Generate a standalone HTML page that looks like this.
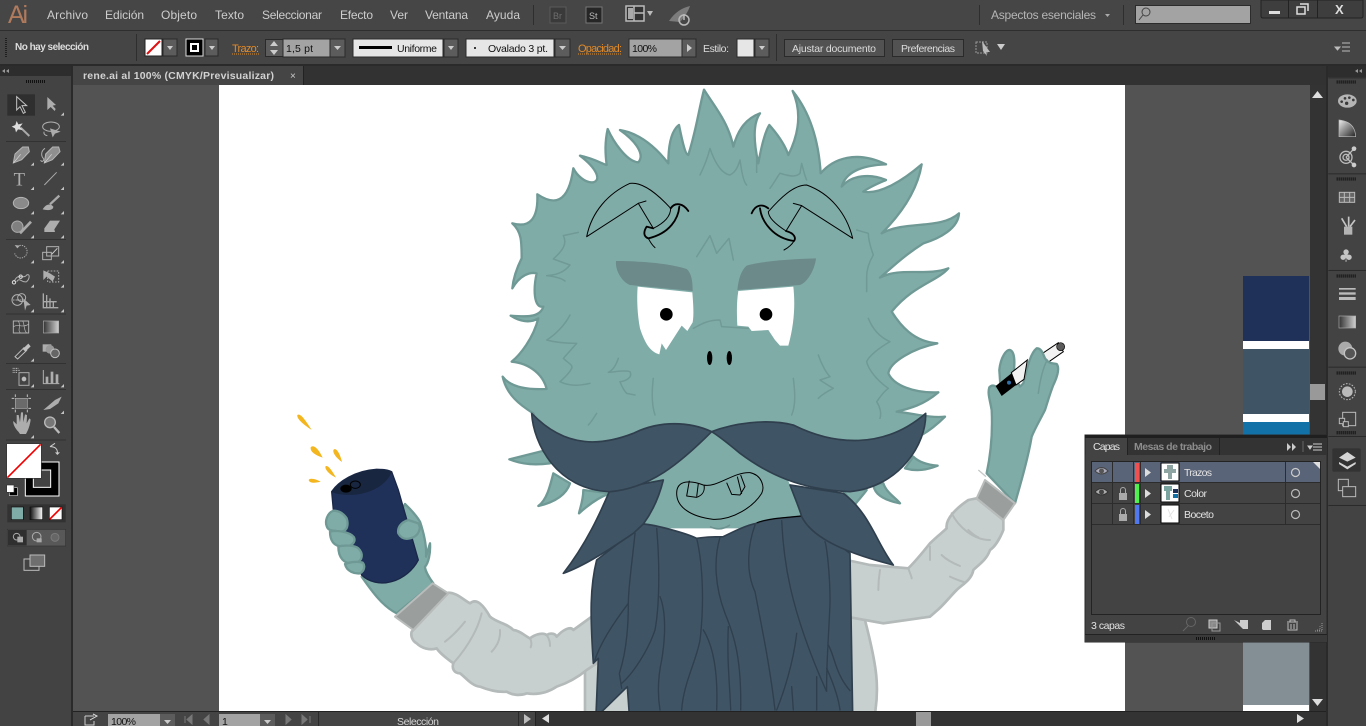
<!DOCTYPE html>
<html lang="es"><head><meta charset="utf-8"><title>rene.ai</title>
<style>
html,body{margin:0;padding:0;background:#434343;overflow:hidden}
svg{display:block;position:absolute;left:0;top:0}
text{font-family:"Liberation Sans",sans-serif;font-size:11px;fill:#cfcfcf}
.m{font-size:12px;fill:#cdcdcd}
.b{fill:#dcdcdc;font-size:10.5px}
.o{fill:#e08a2a}
.k{fill:#111;font-size:10.5px}
.t{stroke:#b0b0b0;fill:none;stroke-width:3}
.f{fill:#adadad}
.fur{fill:#80aca8;stroke:#6f9995;stroke-width:7;stroke-linejoin:round}
.ln{fill:none;stroke:#6f9a96;stroke-width:4.5;stroke-linejoin:round;stroke-linecap:round}
.sl{fill:#c8d0cf;stroke:#b3bab9;stroke-width:8;stroke-linejoin:round}
.slx{fill:none;stroke:#b3bab9;stroke-width:6;stroke-linecap:round}
.bd{fill:#3f5465;stroke:#2f3f4d;stroke-width:5;stroke-linejoin:round}
.sx{fill:none;stroke:#2f3f4d;stroke-width:4;stroke-linecap:round}
.h{fill:none;stroke:#000;stroke-width:3;stroke-linejoin:round;stroke-linecap:round}
.hb{fill:none;stroke:#000;stroke-width:5.5;stroke-linecap:round;stroke-linejoin:round}
.fly{fill:#c4c4c4}
.lay{font-size:10.5px;fill:#e2e2e2}
</style></head><body>
<svg width="1366" height="726" viewBox="0 0 1366 726" xmlns="http://www.w3.org/2000/svg">
<defs>
<clipPath id="ab"><rect x="219" y="85" width="906" height="626"/></clipPath>
<linearGradient id="g1" x1="0" x2="1" y1="0" y2="0"><stop offset="0" stop-color="#333"/><stop offset="1" stop-color="#d0d0d0"/></linearGradient>
<linearGradient id="g2" x1="0" x2="1" y1="0" y2="0"><stop offset="0" stop-color="#111"/><stop offset="1" stop-color="#fff"/></linearGradient>
<linearGradient id="g3" x1="0" x2="1" y1="0" y2="1"><stop offset="0" stop-color="#eee"/><stop offset="1" stop-color="#222"/></linearGradient>
</defs>

<!-- base -->
<rect width="1366" height="726" fill="#434343"/>
<rect x="73" y="85" width="1237" height="626" fill="#535353"/>
<rect x="1243" y="276" width="66" height="65" fill="#1f3059"/>
<rect x="1243" y="341" width="66" height="8" fill="#fff"/>
<rect x="1243" y="349" width="66" height="65" fill="#3f5465"/>
<rect x="1243" y="414" width="66" height="8" fill="#fff"/>
<rect x="1243" y="422" width="66" height="20" fill="#1272a7"/>
<rect x="1243" y="640" width="66" height="65" fill="#848f95"/>
<rect x="1243" y="705" width="66" height="6" fill="#fff"/>
<rect x="219" y="85" width="906" height="626" fill="#fff"/>

<!-- ARTWORK -->
<g clip-path="url(#ab)">
<!-- left sleeve + body -->
<g transform="translate(500,400) scale(.33333)">
<path class="sl" d="M255,790 L255,940 L400,940 L400,700 L290,780 Z"/>
<path class="sl" d="M1045,470 L1100,680 C1130,800 1138,860 1125,940 L1040,940 Z"/>
</g>
<g transform="translate(280,400) scale(.33333)">
<path class="sl" d="M395,695 L505,578 C530,578 548,598 570,610 C590,592 612,618 630,650 C650,668 682,670 700,690 C722,692 740,712 750,715 C770,700 790,698 800,705 C815,696 827,703 830,710 C850,688 872,678 880,690 L935,650 L950,790 L920,810 C890,835 860,850 830,860 C800,880 770,885 740,880 C720,888 695,885 680,875 C650,878 620,868 600,860 C575,858 555,830 540,820 C522,820 515,805 520,790 C500,775 480,760 470,745 C450,752 425,745 410,730 C395,722 392,705 395,695 Z"/>
<path class="slx" d="M605,640 C590,700 555,750 520,790"/>
<path class="slx" d="M555,665 C535,690 515,710 495,725"/>
<path class="slx" d="M660,690 C662,720 650,740 635,755"/>
<path class="slx" d="M750,715 C755,725 755,735 752,742"/>
<path class="slx" d="M800,705 C810,720 810,730 810,738"/>
<path class="fur" d="M245,530 C280,580 310,620 350,640 L460,550 C445,530 435,510 435,500 C445,490 452,460 450,430 L438,470 C440,440 435,410 420,365 C405,340 385,322 375,312 L300,450 Z"/>
<path d="M155,275 C175,245 225,212 290,208 C310,208 325,210 335,215 L355,270 L415,480 C400,510 370,535 335,545 C300,555 265,545 245,525 C215,450 180,390 160,330 Z" fill="#1f3059" stroke="#1a2848" stroke-width="4"/>
<path d="M155,275 C175,245 225,212 290,208 C310,208 325,210 335,215 C325,245 290,272 240,282 C210,287 180,285 160,278 Z" fill="#182640"/>
<ellipse cx="198" cy="266" rx="17" ry="12" fill="#000"/>
<ellipse cx="226" cy="254" rx="15" ry="11" fill="none" stroke="#000" stroke-width="3"/>
<path class="fur" d="M160,332 C140,340 135,365 140,378 C145,395 160,390 180,395 C205,395 205,370 200,355 C190,340 175,332 160,332 Z"/>
<path class="fur" d="M150,395 C150,420 160,440 190,440 C215,442 228,425 222,412 C210,395 170,390 150,395 Z"/>
<path class="fur" d="M175,440 C175,470 190,495 225,490 C250,482 250,460 235,445 C225,435 190,435 175,440 Z"/>
<path class="fur" d="M195,492 C200,515 225,522 240,520 C255,512 255,495 248,488 C230,482 205,488 195,492 Z"/>
<path class="fur" d="M385,360 C360,368 352,385 355,400 C365,418 380,420 400,412 C415,405 425,385 415,370 Z"/>
<polygon points="345,650 458,550 505,580 400,690" fill="#9a9e9d" stroke="#b8bcbb" stroke-width="6" stroke-linejoin="round"/>
<g fill="#f3b61f">
<path d="M52,45 C60,40 70,50 95,90 C65,70 50,55 52,45 Z"/>
<path d="M92,142 C100,132 115,145 128,173 C105,165 90,155 92,142 Z"/>
<path d="M160,150 C168,140 180,160 186,186 C170,175 158,160 160,150 Z"/>
<path d="M136,200 C142,192 155,210 168,233 C150,225 135,210 136,200 Z"/>
<path d="M86,240 C90,232 110,238 122,245 C105,250 88,250 86,240 Z"/>
</g>
</g>
<!-- right arm -->
<g transform="translate(850,330) scale(.33333)">
<path class="sl" d="M-10,690 L60,705 L175,715 C200,690 220,665 240,640 C260,620 280,605 290,595 C285,565 325,530 355,510 L380,505 L460,570 L460,600 C450,625 435,650 420,660 C410,690 385,705 370,720 C365,750 335,765 320,780 C300,800 285,820 265,838 L240,860 L100,880 L-10,860 Z"/>
<path class="slx" d="M90,720 C85,750 85,770 85,780"/>
<path class="slx" d="M175,715 C180,730 185,740 185,745"/>
<path class="slx" d="M275,675 C290,690 310,700 330,708"/>
<path class="slx" d="M305,550 C325,590 370,630 420,630"/>
<path class="slx" d="M240,650 C240,670 240,685 240,690"/>
<path class="slx" d="M355,600 C365,610 375,618 385,622"/>
<path class="slx" d="M300,740 C320,750 340,755 345,758"/>
<path d="M560,82 L625,38 L640,65 L590,100 Z" fill="#f2f2f2" stroke="#000" stroke-width="3"/>
<circle cx="632" cy="50" r="12" fill="#5b5b5b" stroke="#000" stroke-width="2"/>
<path class="fur" d="M410,430 C425,360 428,300 425,240 C420,210 412,190 418,172 C428,160 440,170 452,180 L448,120 C452,80 470,58 480,60 C495,65 495,100 490,135 L510,170 L520,160 C530,120 540,70 560,55 C575,55 578,70 585,85 C595,100 605,100 620,102 C630,115 622,140 610,165 C600,190 590,225 585,240 C570,270 555,295 545,320 C535,380 515,450 495,520 Z"/>
<path d="M437,168 L487,128 L520,148 L455,198 Z" fill="#000"/>
<path d="M484,128 L532,90 L522,148 L498,165 Z" fill="#f2f2f2" stroke="#000" stroke-width="3"/>
<circle cx="477" cy="158" r="6" fill="#2f6fa8"/>
<path class="ln" d="M565,190 C570,150 580,110 592,90"/>
<polygon points="405,450 495,520 460,570 380,505" fill="#9a9e9d" stroke="#b8bcbb" stroke-width="6" stroke-linejoin="round"/>
<path d="M385,420 L408,440" stroke="#c4c8c7" stroke-width="4" fill="none"/>
</g>
<!-- fur under moustache -->
<g transform="translate(500,400) scale(.33333)">
<path class="fur" d="M140,150 L28,178 C70,195 110,195 150,190 Z"/>
<path class="fur" d="M160,220 C150,260 140,300 115,318 C170,305 200,280 210,250 Z"/>
<path class="fur" d="M250,270 C250,300 240,325 237,340 C270,310 300,290 330,280 Z"/>
<path class="fur" d="M1240,170 C1260,190 1290,195 1313,197 C1280,210 1250,215 1215,205 Z"/>
<path class="fur" d="M1150,250 C1160,280 1190,295 1200,310 C1150,300 1120,280 1120,250 Z"/>
<path class="fur" d="M1030,270 L1100,270 C1090,285 1070,305 1060,320 Z"/>
</g>
<!-- fur -->
<g transform="translate(480,85) scale(.33333)">
<path class="fur" d="M672,14 C700,60 745,110 760,185 C775,130 800,100 840,85 C815,120 825,190 835,235 C845,180 855,140 868,120 C890,145 915,180 925,210 C950,160 970,90 938,18 C980,70 1015,150 1022,265 C1060,220 1130,195 1218,238 C1170,240 1100,250 1085,305 C1115,270 1170,265 1218,285 C1195,295 1170,305 1150,320 C1200,330 1270,285 1325,238 C1315,300 1280,370 1205,445 C1280,405 1380,435 1437,385 C1435,430 1380,460 1330,475 C1290,500 1260,525 1200,578 C1260,545 1340,575 1405,550 C1370,590 1300,600 1235,680 C1260,720 1300,770 1372,775 C1300,790 1230,830 1225,865 C1240,900 1300,925 1375,922 C1330,960 1290,970 1250,980 C1300,985 1350,1000 1395,995 C1360,1030 1300,1080 1200,1090 L200,1090 C180,1060 170,1020 160,985 C120,960 80,930 68,875 C90,905 140,915 200,912 C190,870 150,835 95,830 C120,810 160,760 175,700 C150,715 120,710 92,692 C130,695 180,700 190,665 C160,670 160,610 170,565 C150,560 120,570 97,610 C100,580 110,550 125,520 C125,470 125,440 97,415 C150,430 175,400 172,328 C220,360 265,360 280,250 C290,270 315,295 340,292 C365,285 350,250 300,212 C340,220 375,240 380,240 C375,200 375,170 383,132 C400,170 440,230 475,232 C495,210 470,170 420,135 C480,145 530,190 565,235 C565,190 570,140 597,120 C605,160 615,210 625,210 C650,130 655,80 672,14 Z"/>
<g class="ln">
<path d="M650,515 L690,452 L710,505 L747,460 L760,525"/>
<path d="M660,270 C675,240 685,210 690,190 C700,220 720,265 750,270 C770,260 775,240 780,225 C785,260 790,290 800,300"/>
<path d="M830,262 C830,240 830,225 830,215"/>
<path d="M870,310 C885,290 895,270 900,265 C920,270 945,280 960,265 L965,235 C970,255 975,275 980,285"/>
<path d="M295,442 L250,452 C262,475 250,495 220,522 L270,540 C250,565 225,570 200,572 C225,575 245,580 255,588"/>
<path d="M1130,435 L1165,445 C1165,470 1175,495 1180,510 C1165,535 1160,555 1160,575 L1160,620"/>
<path d="M1165,700 C1175,725 1195,755 1230,770 C1195,790 1165,815 1160,830 C1165,855 1195,890 1225,910 C1205,925 1195,945 1190,950 C1200,965 1205,985 1200,1000"/>
<path d="M270,690 C255,720 225,750 200,765 C225,772 260,775 290,775 L250,820 C265,835 280,840 275,850 C265,870 250,880 240,890 C260,900 290,905 330,895"/>
<path d="M415,820 C410,835 400,855 385,862 C410,860 435,855 450,860 C460,880 430,890 420,890 C425,905 435,920 440,925 L465,930"/>
<path d="M520,880 C515,920 515,960 525,990"/>
<path d="M940,880 C945,920 948,960 935,990"/>
<path d="M1015,810 C1025,840 1040,865 1050,875 L1020,885 C1035,895 1050,905 1060,910 C1040,920 1025,930 1015,940"/>
<path d="M350,985 C340,1000 335,1010 325,1020"/>
</g>
<!-- brows -->
<path d="M408,528 C480,528 570,535 620,552 C635,565 638,590 638,618 C560,610 500,605 450,600 C425,590 405,555 408,528 Z" fill="#6b8a89"/>
<path d="M1008,520 C930,522 850,528 800,542 C780,560 775,590 772,615 C840,610 900,605 960,600 C985,590 1005,550 1008,520 Z" fill="#6b8a89"/>
<!-- eyes -->
<path d="M473,605 L637,622 C640,660 642,690 638,712 L622,738 L605,722 L558,795 L545,775 L538,808 C510,800 495,775 480,730 C472,690 470,640 473,605 Z" fill="#fff"/>
<path d="M775,618 L940,605 C945,650 945,710 925,782 L900,782 L885,765 L865,735 L815,738 L805,725 L772,722 C770,680 770,650 775,618 Z" fill="#fff"/>
<path class="ln" d="M640,730 C660,720 680,705 720,705 L725,725 L805,730"/>
<circle cx="559" cy="688" r="19" fill="#000"/>
<circle cx="858" cy="688" r="19" fill="#000"/>
<ellipse cx="689" cy="819" rx="8" ry="21" fill="#000"/>
<ellipse cx="748" cy="819" rx="8" ry="21" fill="#000"/>
</g>
<!-- horns -->
<g transform="translate(580,175) scale(.33333)">
<path class="h" d="M20,185 C35,110 85,55 150,25 C190,20 235,60 272,100 C272,125 250,145 220,160 L175,85 Z"/>
<path class="h" d="M175,85 L198,78"/>
<path class="hb" d="M272,100 C285,80 310,85 325,108"/>
<path class="hb" d="M298,95 C295,130 270,175 205,190 C190,185 190,170 200,155 L220,160"/>
<path class="h" d="M205,190 C210,200 218,212 225,218"/>
<path class="h" d="M818,190 C800,115 750,55 680,30 C640,30 600,70 565,110 C565,130 590,150 618,168 L665,92 Z"/>
<path class="h" d="M665,92 L640,85"/>
<path class="hb" d="M565,100 C545,85 525,90 515,115"/>
<path class="hb" d="M540,100 C545,140 580,190 642,198 C648,190 645,175 618,168"/>
<path class="h" d="M642,198 C635,210 625,218 612,225"/>
</g>
<!-- chin, beard, moustache -->
<g transform="translate(500,400) scale(.33333)">
<path d="M450,180 L635,95 L840,180 L910,355 L770,385 L430,385 Z" fill="#80aca8"/>
<path d="M630,380 Q660,395 690,375" fill="none" stroke="#6d9490" stroke-width="5"/>
<path class="bd" d="M430,372 C470,375 560,400 590,415 C620,410 650,410 670,410 C700,395 740,375 770,370 C800,355 850,355 905,348 L1050,460 L1058,945 L388,945 L382,860 L295,945 L288,945 L295,775 L280,790 C270,640 270,560 290,480 Z"/>
<g class="sx">
<path d="M405,400 C395,500 385,560 385,610 C385,680 378,760 358,820 L365,865"/>
<path d="M470,385 C480,500 478,620 465,690 C445,750 400,820 365,850"/>
<path d="M385,610 C340,670 300,730 283,785"/>
<path d="M590,415 C610,500 612,620 600,720 C590,780 550,850 545,930"/>
<path d="M480,590 C500,640 495,720 485,780 C470,850 475,900 480,930"/>
<path d="M610,690 C635,730 655,800 650,930"/>
<path d="M660,412 C640,480 645,560 675,640 C700,700 725,770 722,930"/>
<path d="M685,680 C680,780 690,860 692,930"/>
<path d="M765,375 C745,430 735,510 765,575 C785,680 810,800 825,930"/>
<path d="M845,362 C850,470 865,620 980,875 C978,790 990,650 990,600 C990,520 980,440 975,425"/>
<path d="M890,700 C880,790 850,880 830,930"/>
<path d="M985,735 C1005,770 1005,820 1050,872"/>
<path d="M980,805 C1000,850 1015,890 1020,930"/>
<path d="M950,830 L950,930"/>
<path d="M875,860 L880,930"/>
</g>
<path d="M770,368 C810,355 860,352 905,348" fill="none" stroke="#000" stroke-width="3"/>
<path class="bd" d="M330,270 C300,340 260,430 190,520 C260,495 340,440 400,400 L430,372 C450,345 475,300 490,240 Z"/>
<path class="bd" d="M870,255 C885,295 900,330 905,350 C930,400 1000,450 1180,495 C1130,430 1110,340 1030,280 Z"/>
<path class="bd" d="M635,95 C700,70 800,55 880,75 C1000,135 1150,150 1277,40 C1280,130 1200,260 1050,275 C900,270 800,220 720,160 C690,135 660,110 635,95 C570,65 480,60 400,100 C310,135 200,150 95,40 C100,130 170,270 330,275 C450,265 540,190 635,95 Z"/>
<g fill="none" stroke="#000" stroke-width="3" stroke-linejoin="round">
<path d="M530,280 C530,240 570,240 610,255 C650,265 700,215 750,218 C785,225 795,260 785,280 C760,320 700,360 640,358 C570,350 530,320 530,280 Z"/>
<path d="M568,242 L560,288 L590,292 C610,285 615,270 612,255"/>
<path d="M595,250 L590,290"/>
<path d="M680,248 L695,283 L720,285 L735,260 L722,225"/>
<path d="M712,230 L725,282"/>
</g>
</g>
</g>

<!-- TITLE BAR -->
<rect width="1366" height="30" fill="#464646"/>
<rect y="30" width="1366" height="1" fill="#2e2e2e"/>
<text x="8" y="23" style="font-size:25px;fill:#b07a5c" textLength="20">Ai</text>
<text x="47" y="19" class="m" textLength="41">Archivo</text>
<text x="105" y="19" class="m" textLength="39">Edición</text>
<text x="161" y="19" class="m" textLength="36">Objeto</text>
<text x="215" y="19" class="m" textLength="29">Texto</text>
<text x="262" y="19" class="m" textLength="60">Seleccionar</text>
<text x="340" y="19" class="m" textLength="33">Efecto</text>
<text x="390" y="19" class="m" textLength="18">Ver</text>
<text x="425" y="19" class="m" textLength="43">Ventana</text>
<text x="486" y="19" class="m" textLength="34">Ayuda</text>
<rect x="533" y="5" width="1" height="20" fill="#2e2e2e"/>
<rect x="550" y="7" width="16" height="16" fill="#3a3a3a" stroke="#5a5a5a"/>
<text x="553" y="19" style="font-size:9px;fill:#6e6e6e">Br</text>
<rect x="586" y="7" width="16" height="16" fill="#262626" stroke="#777"/>
<text x="589" y="19" style="font-size:9px;fill:#bbb">St</text>
<rect x="626" y="6" width="18" height="15" fill="#333" stroke="#bbb" stroke-width="1.5"/>
<path d="M634,6 V21 M634,13 H644" stroke="#bbb" stroke-width="1.5"/>
<rect x="628" y="8" width="5" height="11" fill="#aaa"/>
<path d="M647,11 H653 L650,16 Z" fill="#bbb"/>
<path d="M669,21 C675,12 682,8 690,6 C688,12 684,18 680,22 Z" fill="#7c7c7c"/>
<circle cx="684" cy="20" r="5" fill="none" stroke="#b9b9b9" stroke-width="1.5"/>
<path d="M684,14 V20" stroke="#b9b9b9" stroke-width="1.5"/>
<rect x="979" y="5" width="1" height="20" fill="#2e2e2e"/>
<text x="991" y="19" class="m" textLength="105" style="fill:#b5b5b5">Aspectos esenciales</text>
<path d="M1105,14 H1110 L1107.5,17 Z" fill="#aaa"/>
<rect x="1123" y="5" width="1" height="20" fill="#2e2e2e"/>
<rect x="1135.5" y="5.5" width="115" height="18" fill="#a3a3a3" stroke="#2c2c2c"/>
<circle cx="1146" cy="12" r="4" fill="none" stroke="#444"/>
<path d="M1143,15 L1139,20" stroke="#444"/>
<path d="M1261,0 H1363 V16 Q1363,18 1361,18 H1263 Q1261,18 1261,16 Z" fill="#3e3e3e" stroke="#222"/>
<path d="M1288.5,0 V18 M1317.5,0 V18" stroke="#222"/>
<rect x="1269" y="11" width="11" height="3" fill="#ddd"/>
<path d="M1297,7 H1305 V14 H1297 Z M1300,4 H1308 V11" fill="none" stroke="#ddd" stroke-width="1.5"/>
<text x="1335" y="14" style="font-size:13px;font-weight:bold;fill:#ddd">X</text>

<!-- CONTROL BAR -->
<rect y="31" width="1366" height="33" fill="#454545"/>
<rect y="64" width="1366" height="2" fill="#2a2a2a"/>
<path d="M6,38 V58" stroke="#1f1f1f" stroke-width="2" stroke-dasharray="1 1"/>
<text x="15" y="50" class="b" textLength="74" style="font-weight:bold;font-size:10px">No hay selección</text>
<rect x="136" y="34" width="1" height="27" fill="#2e2e2e"/>
<rect x="145" y="39" width="17" height="17" fill="#fff" stroke="#222"/>
<path d="M147,54 L160,41" stroke="#e01010" stroke-width="2"/>
<rect x="163" y="39" width="14" height="17" fill="#5c5c5c" stroke="#2a2a2a"/>
<path d="M167,46 H173 L170,50 Z" fill="#ccc"/>
<rect x="186" y="39" width="17" height="17" fill="#000" stroke="#ddd"/>
<rect x="191" y="44" width="7" height="7" fill="none" stroke="#fff" stroke-width="2"/>
<rect x="205" y="39" width="13" height="17" fill="#5c5c5c" stroke="#2a2a2a"/>
<path d="M209,46 H215 L212,50 Z" fill="#ccc"/>
<text x="232" y="52" class="o" textLength="27">Trazo:</text>
<path d="M232,54 H259" stroke="#e08a2a" stroke-dasharray="1 1"/>
<rect x="265.5" y="39.5" width="18" height="17" fill="#5c5c5c" stroke="#2a2a2a"/>
<path d="M270,46 L274,41 L278,46 Z M270,50 L274,55 L278,50 Z" fill="#ccc"/>
<rect x="283" y="39" width="47" height="18" fill="#a3a3a3" stroke="#2a2a2a"/>
<text x="286" y="52" class="k" textLength="27">1,5 pt</text>
<rect x="330" y="39" width="15" height="18" fill="#5c5c5c" stroke="#2a2a2a"/>
<path d="M334,46 H341 L337.5,50 Z" fill="#ccc"/>
<rect x="353" y="39" width="90" height="18" fill="#e6e6e6" stroke="#2a2a2a"/>
<rect x="359" y="46" width="33" height="3" fill="#000"/>
<text x="397" y="52" class="k" textLength="40">Uniforme</text>
<rect x="444" y="39" width="14" height="18" fill="#5c5c5c" stroke="#2a2a2a"/>
<path d="M448,46 H454 L451,50 Z" fill="#ccc"/>
<rect x="466" y="39" width="88" height="18" fill="#e6e6e6" stroke="#2a2a2a"/>
<circle cx="475" cy="48" r="1" fill="#000"/>
<text x="488" y="52" class="k" textLength="60">Ovalado 3 pt.</text>
<rect x="555" y="39" width="15" height="18" fill="#5c5c5c" stroke="#2a2a2a"/>
<path d="M559,46 H566 L562.5,50 Z" fill="#ccc"/>
<text x="578" y="52" class="o" textLength="44">Opacidad:</text>
<path d="M578,54 H622" stroke="#e08a2a" stroke-dasharray="1 1"/>
<rect x="629" y="39" width="53" height="18" fill="#a3a3a3" stroke="#2a2a2a"/>
<text x="632" y="52" class="k" textLength="25">100%</text>
<rect x="682" y="39" width="14" height="18" fill="#5c5c5c" stroke="#2a2a2a"/>
<path d="M687,44 L692,48 L687,52 Z" fill="#ccc"/>
<text x="703" y="52" class="b" textLength="26">Estilo:</text>
<rect x="737" y="39" width="17" height="18" fill="#e6e6e6" stroke="#2a2a2a"/>
<rect x="755" y="39" width="14" height="18" fill="#5c5c5c" stroke="#2a2a2a"/>
<path d="M759,46 H765 L762,50 Z" fill="#ccc"/>
<rect x="776" y="34" width="1" height="27" fill="#2e2e2e"/>
<rect x="784.5" y="39.5" width="100" height="17" fill="#525252" stroke="#2a2a2a"/>
<text x="792" y="52" class="b" textLength="84">Ajustar documento</text>
<rect x="892.5" y="39.5" width="71" height="17" fill="#525252" stroke="#2a2a2a"/>
<text x="901" y="52" class="b" textLength="54">Preferencias</text>
<path d="M976,42 H987 V53 H976 Z" fill="none" stroke="#999" stroke-dasharray="2 1"/>
<path d="M982,41 L990,52 L986,52 L987,56 L983,51 Z" fill="#bbb"/>
<path d="M997,44 H1005 L1001,50 Z" fill="#ccc"/>
<path d="M1335,47 H1340 L1337.5,50 Z M1342,43 H1350 M1342,47 H1350 M1342,51 H1350" fill="#bbb" stroke="#bbb"/>

<!-- TAB ROW -->
<rect x="73" y="66" width="1253" height="19" fill="#323232"/>
<rect x="73" y="66" width="230" height="19" fill="#454545"/>
<path d="M303.5,66 V85" stroke="#222"/>
<text x="83" y="79" style="font-size:10.5px;font-weight:bold;fill:#d2d2d2" textLength="191">rene.ai al 100% (CMYK/Previsualizar)</text>
<text x="290" y="79" style="font-size:10px;fill:#ccc">×</text>

<!-- SCROLLBARS -->
<rect x="1310" y="85" width="16" height="626" fill="#333"/>
<path d="M1312,98 L1317.5,91 L1323,98 Z" fill="#ddd"/>
<rect x="1310" y="384" width="15" height="16" fill="#999"/>
<path d="M1312,699 L1317.5,706 L1323,699 Z" fill="#ddd"/>
<rect y="711" x="73" width="1253" height="15" fill="#444"/>
<rect y="711" x="536" width="790" height="15" fill="#333"/>
<rect y="711" x="916" width="15" height="15" fill="#999"/>
<path d="M549,714 L542,718.5 L549,723 Z" fill="#ddd"/>
<path d="M1297,714 L1304,718.5 L1297,723 Z" fill="#ddd"/>
<rect y="711" x="73" width="1253" height="1" fill="#222"/>

<!-- STATUS -->
<path d="M85,716 H94 M85,716 V725 H94 V721" fill="none" stroke="#ccc"/>
<path d="M90,720 L97,716 L93,714" fill="none" stroke="#ddd"/>
<rect x="108" y="714" width="52" height="12" fill="#a3a3a3"/>
<text x="111" y="725" class="k" textLength="25">100%</text>
<rect x="160" y="714" width="15" height="12" fill="#5c5c5c"/>
<path d="M164,720 H171 L167.5,724 Z" fill="#ccc"/>
<path d="M185,716 V723 M192,715 L187,719.5 L192,724 Z M209,715 L204,719.5 L209,724 Z" fill="#777" stroke="#777"/>
<rect x="219" y="714" width="41" height="12" fill="#a3a3a3"/>
<text x="222" y="725" class="k">1</text>
<rect x="260" y="714" width="15" height="12" fill="#5c5c5c"/>
<path d="M264,720 H271 L267.5,724 Z" fill="#ccc"/>
<path d="M286,715 L291,719.5 L286,724 Z M302,715 L307,719.5 L302,724 Z M310,716 V723" fill="#777" stroke="#777"/>
<rect x="318" y="712" width="1" height="14" fill="#2a2a2a"/>
<text x="397" y="725" textLength="42" style="font-size:10.5px;fill:#d5d5d5">Selección</text>
<rect x="518" y="712" width="1" height="14" fill="#2a2a2a"/>
<path d="M524,714 L531,719 L524,724 Z" fill="#bbb"/>
<rect x="535" y="711" width="1" height="15" fill="#222"/>

<!-- LEFT TOOLBAR -->
<rect x="0" y="66" width="71" height="660" fill="#434343"/>
<rect x="0" y="66" width="71" height="10" fill="#2d2d2d"/>
<rect x="71" y="66" width="2" height="660" fill="#2a2a2a"/>
<path d="M5,69 L2,71 L5,73 Z M9,69 L6,71 L9,73 Z" fill="#999"/>
<path d="M26,81.5 H46" stroke="#111" stroke-width="3" stroke-dasharray="1 1"/>
<g transform="translate(0,85) scale(.33333)">
<rect x="22" y="28" width="83" height="64" fill="#2f2f2f"/>
<path d="M50,35 L50,75 L60,65 L70,85 L76,82 L66,62 L80,62 Z" fill="none" stroke="#c4c4c4" stroke-width="3"/>
<path d="M142,36 L142,75 L152,66 L164,78 L167,72 L158,62 L168,60 Z" class="f"/>
<path d="M62,128 L88,153" stroke="#aaa" stroke-width="6"/>
<path d="M50,108 L55,118 L68,115 L60,126 L68,135 L54,133 L48,142 L45,130 L35,125 L46,120 Z" fill="#ddd"/>
<ellipse cx="153" cy="125" rx="25" ry="14" class="t"/>
<path d="M150,130 L182,140 L165,146 L158,157 Z" class="f"/>
<path d="M132,140 Q130,150 142,152" class="t"/>
<rect x="18" y="169" width="180" height="2" fill="#2a2a2a"/>
<path d="M85,186 L68,186 L45,207 L40,234 L65,224 L88,200 Z" fill="#8f8f8f" stroke="#b5b5b5" stroke-width="3"/>
<path d="M41,233 L62,208" stroke="#ddd" stroke-width="2"/>
<path d="M176,186 L158,186 L137,207 L133,234 L157,224 L180,200 Z" fill="#8f8f8f" stroke="#b5b5b5" stroke-width="3"/>
<path d="M134,233 L155,208" stroke="#ddd" stroke-width="2"/>
<path d="M135,190 C120,200 125,215 130,220 C135,225 125,235 122,225" class="t"/>
<text x="41" y="301" style="font-family:'Liberation Serif',serif;font-size:56px;fill:#adadad">T</text>
<path d="M133,300 L170,262" stroke="#aaa" stroke-width="3"/>
<ellipse cx="63" cy="354" rx="23" ry="17" fill="#8a8a8a" stroke="#b5b5b5" stroke-width="3"/>
<path d="M178,332 L150,358" stroke="#aaa" stroke-width="7"/>
<path d="M128,373 C135,360 150,352 160,365 C160,378 140,376 128,373 Z" class="f"/>
<circle cx="52" cy="425" r="17" fill="#808080" stroke="#aaa" stroke-width="3"/>
<path d="M60,445 L93,410" stroke="#aaa" stroke-width="8"/>
<path d="M133,430 L150,407 L180,407 L163,433 L165,441 L133,441 Z" class="f"/>
<rect x="18" y="463" width="180" height="2" fill="#2a2a2a"/>
<path d="M52,484 A19,19 0 1 1 44,505" fill="none" stroke="#aaa" stroke-width="3" stroke-dasharray="4 3"/>
<path d="M44,480 L60,482 L52,490 Z" class="f"/>
<rect x="128" y="502" width="26" height="22" class="t"/>
<rect x="140" y="485" width="36" height="28" class="t"/>
<path d="M155,508 L172,490" stroke="#ccc" stroke-width="3"/>
<path d="M42,590 C55,560 70,585 80,570 C90,565 90,580 80,590 C65,595 60,575 50,590" class="t"/>
<circle cx="42" cy="592" r="5" fill="none" stroke="#ddd" stroke-width="3"/><circle cx="62" cy="575" r="5" fill="none" stroke="#ddd" stroke-width="3"/>
<rect x="143" y="558" width="33" height="33" fill="none" stroke="#aaa" stroke-width="3" stroke-dasharray="5 4"/>
<path d="M130,556 L130,585 L140,575 L158,590 L165,575 L150,565 Z" class="f"/>
<circle cx="52" cy="645" r="16" class="t"/><circle cx="65" cy="638" r="12" class="t"/>
<path d="M70,640 L92,660 L80,662 L75,677 Z" class="f"/>
<path d="M40,645 H65" stroke="#ddd" stroke-dasharray="2 2" stroke-width="3"/>
<path d="M130,625 V668 H175 M140,630 V668 M150,640 V668 M160,650 V668 M130,650 H170" stroke="#aaa" stroke-width="4" fill="none"/>
<rect x="18" y="686" width="180" height="2" fill="#2a2a2a"/>
<rect x="40" y="708" width="46" height="36" class="t"/>
<path d="M40,725 C55,715 65,730 86,718 M55,708 C65,725 50,735 62,744 M68,708 C75,720 70,735 80,744" stroke="#bbb" stroke-width="2" fill="none"/>
<rect x="130" y="708" width="46" height="36" fill="url(#g1)" stroke="#aaa" stroke-width="2"/>
<g class="fly">
<path d="M192,82 V92 H182 Z"/><path d="M102,232 V242 H92 Z"/><path d="M192,232 V242 H182 Z"/><path d="M102,305 V315 H92 Z"/><path d="M192,305 V315 H182 Z"/><path d="M102,378 V388 H92 Z"/><path d="M192,378 V388 H182 Z"/><path d="M102,450 V460 H92 Z"/><path d="M192,450 V460 H182 Z"/><path d="M102,525 V535 H92 Z"/><path d="M192,525 V535 H182 Z"/><path d="M102,598 V608 H92 Z"/><path d="M192,598 V608 H182 Z"/><path d="M102,672 V682 H92 Z"/><path d="M192,672 V682 H182 Z"/>
</g>
</g>
<g transform="translate(0,335) scale(.33333)">
<path d="M45,65 L72,38 L80,46 L53,72 Z" fill="none" stroke="#c0c0c0" stroke-width="3"/>
<path d="M68,42 L85,26 L92,34 L76,50 Z" fill="#c0c0c0"/>
<rect x="128" y="28" width="26" height="22" class="f"/>
<circle cx="150" cy="43" r="13" fill="#999"/>
<circle cx="165" cy="55" r="13" fill="#666" stroke="#c0c0c0" stroke-width="3"/>
<rect x="18" y="84" width="180" height="2" fill="#2a2a2a"/>
<path d="M38,100 H55 M38,106 H60 M38,112 H52" stroke="#bbb" stroke-width="3" stroke-dasharray="3 2"/>
<rect x="57" y="113" width="30" height="38" fill="none" stroke="#aaa" stroke-width="3"/>
<circle cx="72" cy="132" r="7" fill="#bbb"/>
<path d="M130,105 V146 H178" class="t"/>
<rect x="137" y="125" width="8" height="20" class="f"/><rect x="152" y="110" width="8" height="35" class="f"/><rect x="167" y="118" width="8" height="27" class="f"/>
<rect x="18" y="163" width="180" height="2" fill="#2a2a2a"/>
<rect x="46" y="190" width="36" height="30" fill="#6a6a6a" stroke="#aaa" stroke-width="2"/>
<path d="M35,190 H43 M85,190 H93 M35,220 H43 M85,220 H93 M46,178 V186 M82,178 V186 M46,224 V232 M82,224 V232" stroke="#c0c0c0" stroke-width="3"/>
<path d="M130,225 L165,195 L185,185 L175,205 L150,222 Z" class="f"/>
<path d="M55,290 C45,280 38,265 40,258 L50,268 L50,240 L56,240 L60,262 L63,232 L69,232 L70,262 L75,238 L81,240 L80,265 L88,250 L92,254 C90,270 85,285 78,297 L60,297 Z" class="f"/>
<circle cx="150" cy="262" r="16" fill="#777" stroke="#bbb" stroke-width="4"/>
<path d="M162,276 L178,294" stroke="#bbb" stroke-width="7"/>
<rect x="18" y="314" width="180" height="2" fill="#2a2a2a"/>
<rect x="76" y="381" width="101" height="102" fill="#000" stroke="#fff" stroke-width="3"/>
<rect x="100" y="405" width="52" height="52" fill="#434343" stroke="#fff" stroke-width="3"/>
<rect x="20" y="326" width="104" height="104" fill="#fff" stroke="#333" stroke-width="2"/>
<path d="M22,428 L122,328" stroke="#ef0000" stroke-width="5"/>
<path d="M150,335 L165,325 M150,335 Q175,335 172,358" fill="none" stroke="#ccc" stroke-width="3"/>
<path d="M165,352 H180 L172,360 Z" fill="#ccc"/>
<rect x="28" y="458" width="24" height="24" fill="#000" stroke="#ccc" stroke-width="2"/>
<rect x="20" y="450" width="22" height="22" fill="#fff" stroke="#333" stroke-width="2"/>
<rect x="22" y="508" width="175" height="54" fill="#323232"/>
<rect x="34" y="516" width="36" height="38" fill="#80aca8" stroke="#111" stroke-width="2"/>
<rect x="90" y="516" width="38" height="38" fill="url(#g2)" stroke="#111" stroke-width="2"/>
<rect x="148" y="516" width="38" height="38" fill="#fff" stroke="#111" stroke-width="2"/>
<path d="M149,553 L185,517" stroke="#ef0000" stroke-width="5"/>
<rect x="22" y="583" width="175" height="50" fill="#585858" stroke="#323232" stroke-width="2"/>
<rect x="24" y="585" width="56" height="46" fill="#2f2f2f"/>
<circle cx="50" cy="605" r="10" fill="none" stroke="#aaa" stroke-width="3"/><rect x="52" y="605" width="17" height="17" fill="#aaa"/>
<circle cx="110" cy="605" r="13" fill="none" stroke="#aaa" stroke-width="3"/><rect x="110" y="610" width="15" height="12" fill="#aaa"/>
<circle cx="165" cy="607" r="12" fill="#666" stroke="#7a7a7a" stroke-width="3"/>
<rect x="72" y="672" width="45" height="34" fill="none" stroke="#bbb" stroke-width="3"/>
<rect x="90" y="660" width="44" height="34" fill="#6f6f6f" stroke="#bbb" stroke-width="3"/>
<g class="fly">
<path d="M102,70 V80 H92 Z"/><path d="M102,147 V157 H92 Z"/><path d="M192,147 V157 H182 Z"/><path d="M192,227 V237 H182 Z"/><path d="M102,300 V310 H92 Z"/>
</g>
</g>

<!-- RIGHT DOCK -->
<rect x="1326" y="66" width="2" height="660" fill="#2a2a2a"/>
<rect x="1328" y="66" width="38" height="660" fill="#434343"/>
<rect x="1328" y="66" width="38" height="11" fill="#2d2d2d"/>
<path d="M1358,69 L1355,71 L1358,73 Z M1362,69 L1359,71 L1362,73 Z" fill="#999"/>
<g transform="translate(1300,70) scale(.33333)">
<g fill="#2a2a2a">
<rect x="85" y="22" width="115" height="3"/><rect x="85" y="310" width="115" height="3"/><rect x="85" y="600" width="115" height="3"/><rect x="85" y="890" width="115" height="3"/><rect x="85" y="1098" width="115" height="3"/><rect x="85" y="1305" width="115" height="3"/>
</g>
<g stroke="#111" stroke-width="10" stroke-dasharray="3 3">
<path d="M110,36 H168"/><path d="M110,327 H168"/><path d="M110,618 H168"/><path d="M110,909 H168"/><path d="M110,1088 H168"/>
</g>
<ellipse cx="142" cy="93" rx="28" ry="20" fill="#b4b4b4"/>
<g fill="#3a3a3a"><circle cx="125" cy="95" r="4"/><circle cx="135" cy="85" r="4"/><circle cx="148" cy="83" r="4"/><circle cx="160" cy="90" r="4"/><circle cx="140" cy="100" r="5"/></g>
<path d="M117,150 Q165,155 167,200 L117,200 Z" fill="url(#g3)" stroke="#bbb" stroke-width="2"/>
<circle cx="138" cy="262" r="18" fill="none" stroke="#bbb" stroke-width="4"/><circle cx="138" cy="262" r="9" fill="none" stroke="#bbb" stroke-width="4"/>
<path d="M138,262 L162,236 M138,262 L162,285" stroke="#bbb" stroke-width="4"/>
<circle cx="162" cy="236" r="7" fill="#ccc"/><circle cx="162" cy="285" r="7" fill="#ccc"/>
<rect x="118" y="367" width="46" height="30" fill="#666" stroke="#bbb" stroke-width="3"/>
<path d="M133,367 V397 M149,367 V397 M118,382 H164" stroke="#bbb" stroke-width="3"/>
<rect x="132" y="470" width="25" height="24" fill="#b4b4b4"/>
<path d="M140,470 L125,445 M146,470 L146,440 M150,470 L165,450" stroke="#c4c4c4" stroke-width="5"/>
<text x="116" y="575" style="font-family:'DejaVu Sans',sans-serif;font-size:50px;fill:#c4c4c4">♣</text>
<rect x="117" y="654" width="50" height="5" fill="#bbb"/><rect x="117" y="667" width="50" height="7" fill="#bbb"/><rect x="117" y="681" width="50" height="9" fill="#bbb"/>
<rect x="117" y="738" width="50" height="36" fill="url(#g1)" stroke="#aaa" stroke-width="2"/>
<circle cx="136" cy="836" r="21" fill="#aaa"/>
<circle cx="150" cy="850" r="17" fill="#555" stroke="#c4c4c4" stroke-width="4"/>
<circle cx="142" cy="965" r="24" fill="none" stroke="#bbb" stroke-width="3" stroke-dasharray="5 4"/>
<circle cx="142" cy="965" r="16" fill="#bbb"/>
<rect x="128" y="1027" width="39" height="40" fill="none" stroke="#bbb" stroke-width="3"/>
<rect x="118" y="1045" width="16" height="16" fill="#434343" stroke="#bbb" stroke-width="3"/>
<rect x="130" y="1055" width="15" height="15" fill="#434343" stroke="#bbb" stroke-width="3"/>
<rect x="97" y="1135" width="85" height="70" rx="4" fill="#333"/>
<path d="M142,1175 L117,1163 L142,1146 L167,1163 Z" fill="#d4d4d4"/>
<path d="M117,1176 L142,1190 L167,1176 L167,1182 L142,1198 L117,1182 Z" fill="#d4d4d4"/>
<rect x="115" y="1228" width="30" height="34" fill="none" stroke="#bbb" stroke-width="3"/>
<rect x="128" y="1250" width="39" height="30" fill="#434343" stroke="#bbb" stroke-width="3"/>
</g>

<!-- LAYERS PANEL -->
<rect x="1085" y="435" width="242" height="207" fill="#434343" stroke="#2a2a2a"/>
<rect x="1085" y="435" width="242" height="3" fill="#1f1f1f"/>
<rect x="1085" y="438" width="242" height="17" fill="#333"/>
<rect x="1086" y="438" width="41" height="17" fill="#434343"/>
<rect x="1127" y="438" width="1" height="17" fill="#222"/>
<rect x="1219" y="438" width="1" height="17" fill="#222"/>
<text x="1093" y="450" class="lay" textLength="27">Capas</text>
<text x="1134" y="450" style="font-size:10.5px;fill:#8c8c8c;font-weight:bold" textLength="78">Mesas de trabajo</text>
<path d="M1287,443 L1291,447 L1287,451 Z M1292,443 L1296,447 L1292,451 Z" fill="#ccc"/>
<path d="M1303,441 V452" stroke="#666"/>
<path d="M1308,446 H1312 L1310,449 Z M1313,444 H1322 M1313,447 H1322 M1313,450 H1322" stroke="#ccc" fill="#ccc"/>
<rect x="1091.5" y="461.5" width="229" height="153" fill="#434343" stroke="#232323"/>
<rect x="1092" y="462" width="228" height="20" fill="#5a6478"/>
<path d="M1092,482.5 H1320 M1092,503.5 H1320 M1092,524.5 H1320" stroke="#2c2c2c"/>
<path d="M1112.5,462 V524 M1133.5,462 V524 M1285.5,462 V524" stroke="#2c2c2c"/>
<path d="M1140.5,462 V524" stroke="#2c2c2c"/>
<rect x="1135" y="463" width="4" height="19" fill="#f05050"/>
<rect x="1135" y="484" width="4" height="19" fill="#50f050"/>
<rect x="1135" y="505" width="4" height="19" fill="#5078f0"/>
<path d="M1095,471 Q1101.5,464 1108,471 Q1101.5,477 1095,471 Z" fill="#aab" stroke="#444"/><circle cx="1101.5" cy="471" r="2.5" fill="#555"/>
<path d="M1095,492 Q1101.5,485 1108,492 Q1101.5,498 1095,492 Z" fill="#aaa" stroke="#333"/><circle cx="1101.5" cy="492" r="2.5" fill="#444"/>
<rect x="1119" y="493" width="8" height="7" fill="#aaa"/><path d="M1120.5,493 V490 A2.5,2.5 0 0 1 1125.5,490 V493" fill="none" stroke="#aaa"/>
<rect x="1119" y="514" width="8" height="7" fill="#aaa"/><path d="M1120.5,514 V511 A2.5,2.5 0 0 1 1125.5,511 V514" fill="none" stroke="#aaa"/>
<path d="M1145,468 L1151,472.5 L1145,477 Z M1145,489 L1151,493.5 L1145,498 Z M1145,510 L1151,514.5 L1145,519 Z" fill="#ddd"/>
<rect x="1161" y="463" width="18" height="18" fill="#fff" stroke="#000"/>
<path d="M1167,465 H1173 V469 H1176 V473 H1172 V479 H1168 V473 H1164 V469 H1167 Z" fill="#8fa5a3"/>
<rect x="1161" y="484" width="18" height="18" fill="#fff" stroke="#000"/>
<path d="M1164,486 H1172 V491 H1170 V500 H1166 V491 H1164 Z" fill="#7aa4a0"/>
<rect x="1173" y="489" width="5" height="4" fill="#1f3059"/><rect x="1173" y="494" width="5" height="4" fill="#1272a7"/>
<rect x="1161" y="505" width="18" height="18" fill="#fff" stroke="#000"/>
<path d="M1168,509 L1172,519 M1174,510 L1169,517" stroke="#e4e4e4"/>
<text x="1184" y="476" class="lay" textLength="28">Trazos</text>
<text x="1184" y="497" class="lay" textLength="23">Color</text>
<text x="1184" y="518" class="lay" textLength="30">Boceto</text>
<circle cx="1295.5" cy="472.5" r="4" fill="none" stroke="#ccc" stroke-width="1.2"/>
<circle cx="1295.5" cy="493.5" r="4" fill="none" stroke="#bbb" stroke-width="1.2"/>
<circle cx="1295.5" cy="514.5" r="4" fill="none" stroke="#bbb" stroke-width="1.2"/>
<path d="M1313,462 H1320 V469 Z" fill="#dfdfdf"/>
<text x="1091" y="629" class="lay" textLength="34">3 capas</text>
<circle cx="1191" cy="622" r="4.5" fill="none" stroke="#666"/><path d="M1188,626 L1183,631" stroke="#666"/>
<rect x="1209" y="620" width="8" height="8" fill="#888" stroke="#ccc"/><rect x="1212" y="623" width="8" height="8" fill="none" stroke="#999"/>
<path d="M1234,620 L1240,623 L1240,620 H1248 V629 H1243 L1240,626 Z" fill="#ccc"/>
<path d="M1262,629 V623 L1265,620 H1271 V630 H1263 Z" fill="#ccc"/>
<path d="M1287,622 H1298 M1290,622 V620 H1295 V622 M1288,623 V630 H1297 V623 M1291,624 V629 M1294,624 V629" fill="none" stroke="#bbb"/>
<path d="M1322,623 V631 H1314" stroke="#999" stroke-dasharray="1 1" stroke-width="1" fill="none"/>
<path d="M1320,626 V630 H1316" stroke="#888" stroke-dasharray="1 1" stroke-width="1" fill="none"/>
<rect x="1085" y="634" width="242" height="1" fill="#222"/>
<rect x="1085" y="635" width="242" height="7" fill="#3a3a3a"/>
<path d="M1196,638.5 H1216" stroke="#111" stroke-width="3" stroke-dasharray="1 1"/>
</svg>
</body></html>
